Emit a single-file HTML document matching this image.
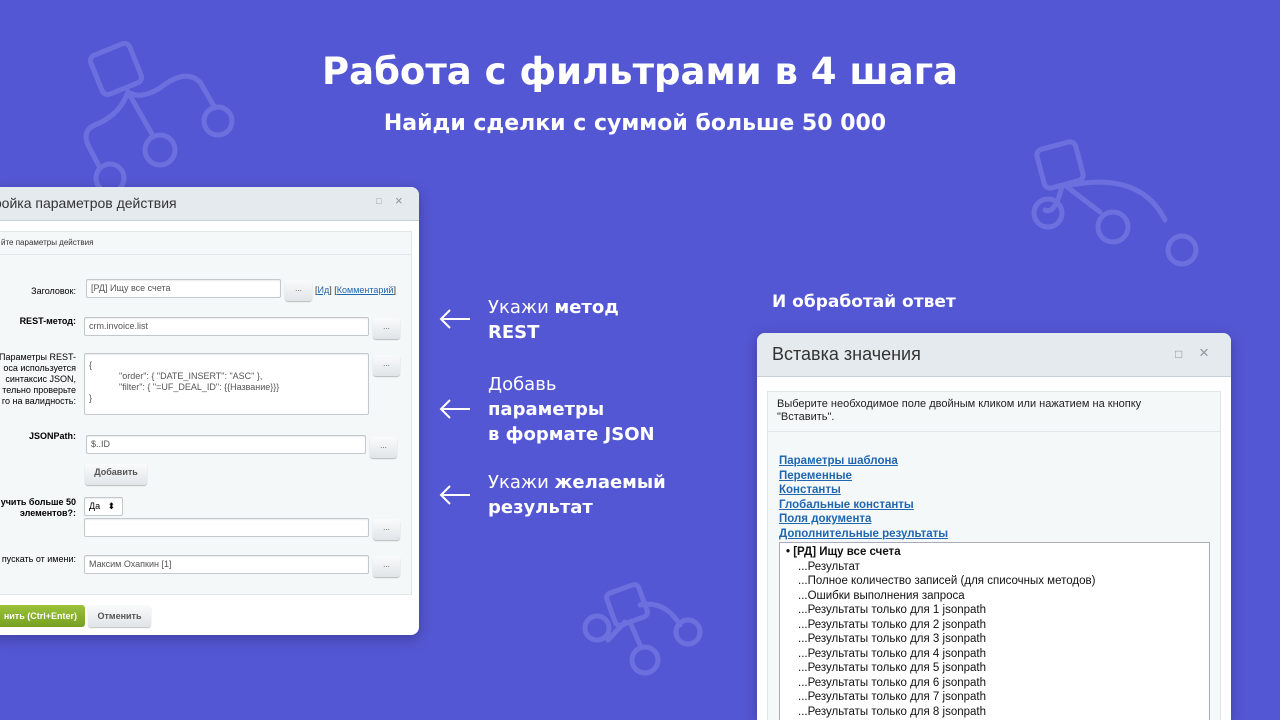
<!DOCTYPE html>
<html><head><meta charset="utf-8"><style>
*{margin:0;padding:0;box-sizing:border-box}
html,body{width:1280px;height:720px;overflow:hidden}
body{background:#5457d4;font-family:"Liberation Sans",sans-serif;position:relative}
.h1{position:absolute;top:50px;left:0;width:1280px;text-align:center;color:#fff;font:bold 37px "DejaVu Sans","Liberation Sans",sans-serif}
.h2{position:absolute;top:111px;left:0;width:1270px;text-align:center;color:#fff;font:bold 22px "DejaVu Sans","Liberation Sans",sans-serif}
.dlg{position:absolute;background:#fff;border-radius:8px;overflow:hidden;box-shadow:0 4px 14px rgba(0,0,0,.25)}
.tb{background:#e5eaee;border-bottom:1px solid #c9d0d6;color:#333;position:relative}
.ic{position:absolute;color:#8a959c}
.lbl{position:absolute;font-size:9px;color:#000;text-align:right;right:343px;line-height:11px;white-space:nowrap}
.inp{position:absolute;border:1px solid #c3c8cc;border-radius:2px;background:#fff;font-size:9px;color:#555;padding:3px 4px;box-shadow:inset 0 1px 1px rgba(0,0,0,.08)}
.btn{position:absolute;width:27px;height:21px;border-radius:3px;background:linear-gradient(#fafbfb,#e1e5e8);box-shadow:0 1px 1px rgba(0,0,0,.25);font-size:8px;text-align:center;line-height:17px;color:#555}
.side{position:absolute;left:488px;color:#fff;font:18px "DejaVu Sans","Liberation Sans",sans-serif;line-height:25px}
.arr{position:absolute;left:438px}
a{color:#2067b0;text-decoration:underline}
.lst div{height:14.5px;line-height:14.5px}
</style></head><body>
<svg width="1280" height="720" style="position:absolute;left:0;top:0" fill="none" stroke="#6c70de" stroke-width="5" stroke-linecap="round">
<g><rect x="95" y="48" width="42" height="42" rx="6" transform="rotate(-22 116 69)"/><path d="M128 92 Q140 100 160 88 Q185 68 200 82 L215 108"/><circle cx="218" cy="121" r="14"/><path d="M128 92 L152 134"/><circle cx="160" cy="150" r="15"/><path d="M128 92 Q120 115 95 125 Q82 130 88 145 L100 168"/><circle cx="110" cy="178" r="14"/></g>
<g><rect x="1040" y="145" width="40" height="40" rx="6" transform="rotate(-15 1060 165)"/><path d="M1062 186 Q1055 215 1045 210"/><circle cx="1048" cy="213" r="14"/><path d="M1066 186 L1100 212"/><circle cx="1113" cy="227" r="15"/><path d="M1066 186 Q1140 170 1165 220"/><circle cx="1182" cy="250" r="14"/></g>
<g><rect x="610" y="588" width="34" height="34" rx="5" transform="rotate(-20 627 605)"/><path d="M625 622 L608 640"/><circle cx="597" cy="628" r="12"/><path d="M630 622 L640 645"/><circle cx="645" cy="660" r="13"/><path d="M640 605 Q665 600 680 625"/><circle cx="688" cy="632" r="12"/></g>
</svg>
<div class="h1">Работа с фильтрами в 4 шага</div>
<div class="h2">Найди сделки с суммой больше 50 000</div>

<div class="dlg" style="left:-10px;top:187px;width:429px;height:448px">
 <div class="tb" style="height:34px;font-size:14px;padding:8px 0 0 0">&nbsp;ройка параметров действия<span class="ic" style="left:386px;top:9px;font-size:9px">□</span><span class="ic" style="left:405px;top:6px;font-size:13px">×</span></div>
 <div style="position:absolute;left:0;top:44px;width:422px;height:364px;background:#f5f8f9;border:1px solid #e1e6e9">
  <div style="height:23px;border-bottom:1px solid #e1e6e9;font-size:8px;padding:6px 10px;color:#333">йте параметры действия</div>
 </div>
 <div class="lbl" style="top:99px">Заголовок:</div>
 <div class="inp" style="left:96px;top:92px;width:195px;height:19px">[РД] Ищу все счета</div>
 <div class="btn" style="left:295px;top:93px">...</div>
 <div style="position:absolute;left:325px;top:98px;font-size:9px;color:#333">[<a>Ид</a>] [<a>Комментарий</a>]</div>
 <div class="lbl" style="top:129px;font-weight:bold">REST-метод:</div>
 <div class="inp" style="left:94px;top:130px;width:285px;height:19px">crm.invoice.list</div>
 <div class="btn" style="left:383px;top:131px">...</div>
 <div class="lbl" style="top:165px">Параметры REST-<br>оса используется<br>синтаксис JSON,<br>тельно проверьте<br>го на валидность:</div>
 <div class="inp" style="left:94px;top:166px;width:285px;height:62px;line-height:11px;padding-top:6px">{<br><span style="padding-left:30px">"order": { "DATE_INSERT": "ASC" },</span><br><span style="padding-left:30px">"filter": { "=UF_DEAL_ID": {{Название}}}</span><br>}</div>
 <div class="btn" style="left:383px;top:168px">...</div>
 <div class="lbl" style="top:244px;font-weight:bold">JSONPath:</div>
 <div class="inp" style="left:96px;top:248px;width:280px;height:19px">$..ID</div>
 <div class="btn" style="left:380px;top:250px">...</div>
 <div class="btn" style="left:95px;top:277px;width:62px;font-weight:bold;font-size:9px">Добавить</div>
 <div class="lbl" style="top:310px;font-weight:bold">учить больше 50<br>элементов?:</div>
 <div class="inp" style="left:94px;top:310px;width:39px;height:19px;color:#000">Да &nbsp;&nbsp;⬍</div>
 <div class="inp" style="left:94px;top:331px;width:285px;height:19px"></div>
 <div class="btn" style="left:383px;top:332px">...</div>
 <div class="lbl" style="top:367px">пускать от имени:</div>
 <div class="inp" style="left:94px;top:368px;width:285px;height:19px">Максим Охапкин [1]</div>
 <div class="btn" style="left:383px;top:369px">...</div>
 <div style="position:absolute;left:0;top:418px;width:95px;height:22px;border-radius:3px;background:linear-gradient(#9cc23a,#76a022);color:#fff;font-size:9px;font-weight:bold;line-height:22px;text-align:right;padding-right:8px">нить (Ctrl+Enter)</div>
 <div class="btn" style="left:98px;top:418px;width:63px;height:22px;line-height:22px;font-size:9px;font-weight:bold">Отменить</div>
</div>

<svg class="arr" style="top:308px" width="34" height="22" stroke="#fff" stroke-width="2" fill="none"><path d="M32 11H3M12 2L3 11L12 20"/></svg>
<div class="side" style="top:295px">Укажи <b>метод</b><br><b>REST</b></div>
<svg class="arr" style="top:398px" width="34" height="22" stroke="#fff" stroke-width="2" fill="none"><path d="M32 11H3M12 2L3 11L12 20"/></svg>
<div class="side" style="top:372px">Добавь<br><b>параметры<br>в формате JSON</b></div>
<svg class="arr" style="top:484px" width="34" height="22" stroke="#fff" stroke-width="2" fill="none"><path d="M32 11H3M12 2L3 11L12 20"/></svg>
<div class="side" style="top:470px">Укажи <b>желаемый<br>результат</b></div>
<div style="position:absolute;left:772px;top:292px;color:#fff;font:bold 17px 'DejaVu Sans','Liberation Sans',sans-serif">И обработай ответ</div>

<div class="dlg" style="left:757px;top:333px;width:474px;height:387px;border-radius:8px 8px 0 0">
 <div class="tb" style="height:44px;font-size:18px;padding:11px 0 0 15px">Вставка значения<span class="ic" style="left:418px;top:14px;font-size:12px">□</span><span class="ic" style="left:442px;top:10px;font-size:17px">×</span></div>
 <div style="position:absolute;left:10px;top:58px;width:454px;height:329px;background:#f5f8f9;border:1px solid #e1e6e9;border-bottom:none">
  <div style="height:40px;border-bottom:1px solid #e1e6e9;font-size:11px;line-height:13px;padding:6px 70px 6px 9px;color:#222">Выберите необходимое поле двойным кликом или нажатием на кнопку "Вставить".</div>
  <div style="padding:22px 0 0 11px;font-size:11.5px;font-weight:bold;line-height:14.5px"><a>Параметры шаблона</a><br><a>Переменные</a><br><a>Константы</a><br><a>Глобальные константы</a><br><a>Поля документа</a><br><a>Дополнительные результаты</a></div>
  <div class="lst" style="position:absolute;left:11px;top:150px;width:431px;height:179px;overflow:hidden;background:#fff;border:1px solid #aab;border-bottom:none;font-size:11.5px;color:#111;padding:2px 0 0 6px">
   <div style="font-weight:bold">• [РД] Ищу все счета</div>
   <div style="padding-left:12px">...Результат</div>
   <div style="padding-left:12px">...Полное количество записей (для списочных методов)</div>
   <div style="padding-left:12px">...Ошибки выполнения запроса</div>
   <div style="padding-left:12px">...Результаты только для 1 jsonpath</div>
   <div style="padding-left:12px">...Результаты только для 2 jsonpath</div>
   <div style="padding-left:12px">...Результаты только для 3 jsonpath</div>
   <div style="padding-left:12px">...Результаты только для 4 jsonpath</div>
   <div style="padding-left:12px">...Результаты только для 5 jsonpath</div>
   <div style="padding-left:12px">...Результаты только для 6 jsonpath</div>
   <div style="padding-left:12px">...Результаты только для 7 jsonpath</div>
   <div style="padding-left:12px">...Результаты только для 8 jsonpath</div>
  </div>
 </div>
</div>
</body></html>
